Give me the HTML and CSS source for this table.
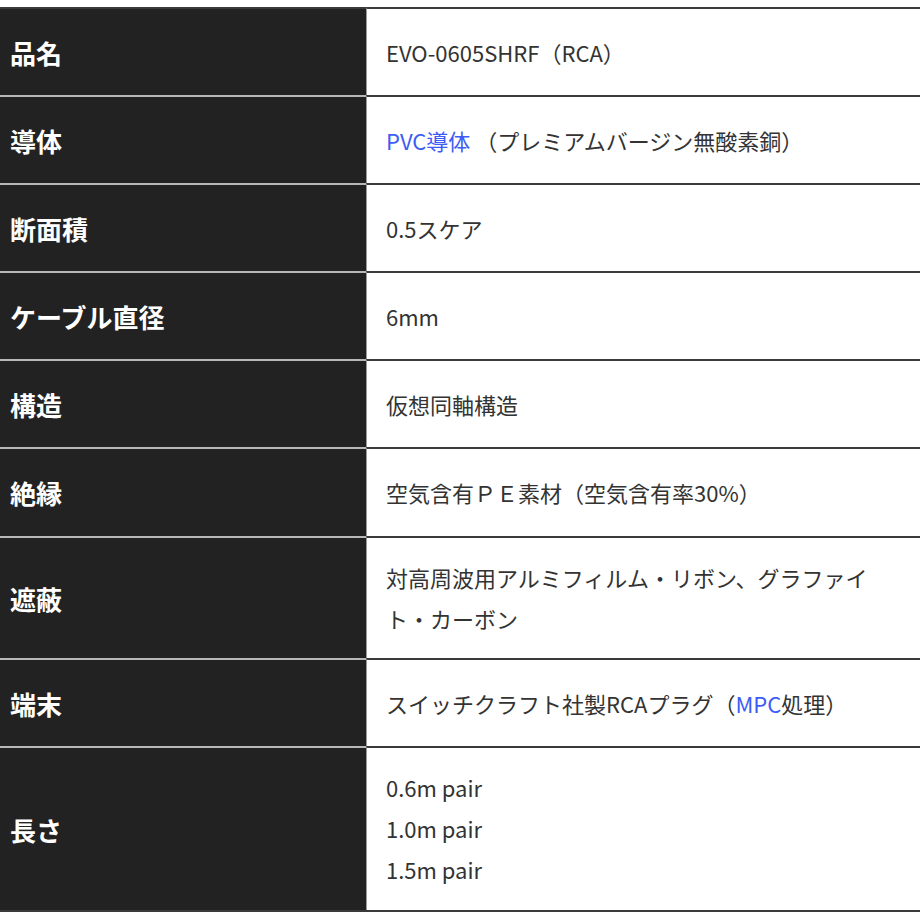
FILE: index.html
```html
<!DOCTYPE html>
<html lang="ja">
<head>
<meta charset="utf-8">
<title>Spec</title>
<link rel="stylesheet" href="styles.css">
</head>
<body>
<div class="spec">
  <div class="row"><div class="label">品名</div><div class="value">EVO-0605SHRF（RCA）</div></div>
  <div class="row"><div class="label">導体</div><div class="value"><span><span class="link">PVC導体</span> （プレミアムバージン無酸素銅）</span></div></div>
  <div class="row"><div class="label">断面積</div><div class="value">0.5スケア</div></div>
  <div class="row"><div class="label">ケーブル直径</div><div class="value">6mm</div></div>
  <div class="row"><div class="label">構造</div><div class="value">仮想同軸構造</div></div>
  <div class="row tall"><div class="label">絶縁</div><div class="value">空気含有ＰＥ素材（空気含有率30%）</div></div>
  <div class="row"><div class="label">遮蔽</div><div class="value">対高周波用アルミフィルム・リボン、グラファイト・カーボン</div></div>
  <div class="row"><div class="label">端末</div><div class="value"><span>スイッチクラフト社製RCAプラグ（<span class="link">MPC</span>処理）</span></div></div>
  <div class="row last"><div class="label">長さ</div><div class="value"><div>0.6m pair</div><div>1.0m pair</div><div>1.5m pair</div></div></div>
</div>
</body>
</html>
```

FILE: styles.css
```css
html, body {
  margin: 0;
  padding: 0;
  background: #ffffff;
}

body {
  padding-top: 7px;
  font-family: "Noto Sans CJK JP", "Noto Sans", sans-serif;
  overflow: hidden;
}

.spec {
  width: 920px;
  display: flex;
  flex-direction: column;
}

.row {
  display: flex;
  min-height: 88px;
}

.row.tall {
  min-height: 89px;
}

.row.last {
  border-bottom: 2px solid #3a3a3a;
}

.row.last .value {
  padding-bottom: 20px;
}

.label {
  box-sizing: border-box;
  width: 366px;
  flex: none;
  background: #222222;
  color: #ffffff;
  font-weight: bold;
  font-size: 26px;
  line-height: 41px;
  border-top: 2px solid #b8b8b8;
  padding: 0 10px;
  display: flex;
  align-items: center;
}

.row:first-child .label {
  border-top-color: #3a3a3a;
}

.value {
  box-sizing: border-box;
  flex: 1;
  min-width: 0;
  color: #333333;
  font-size: 22px;
  line-height: 41px;
  border-top: 2px solid #3a3a3a;
  border-left: 1px solid #9a9a9a;
  padding: 19px 34px 19px 19px;
  display: flex;
  flex-direction: column;
  justify-content: center;
}

.link {
  color: #3d5cf5;
}
```
